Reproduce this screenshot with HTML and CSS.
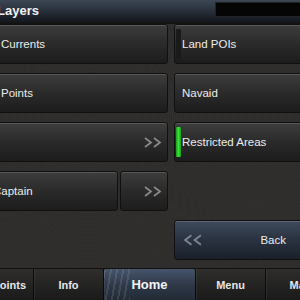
FILE: index.html
```html
<!DOCTYPE html>
<html>
<head>
<meta charset="utf-8">
<link rel="stylesheet" href="styles.css">
</head>
<body>
<div class="app">
  <header class="topbar">
    <h1 class="title">Layers</h1>
    <div class="status"></div>
  </header>
  <main class="grid">
    <button class="btn">Currents</button>
    <button class="btn btn-right"><span class="ind ind-off"></span>Land POIs</button>
    <button class="btn">Points</button>
    <button class="btn btn-right"><span class="ind ind-none"></span>Navaid</button>
    <button class="btn btn-chev"><svg class="chev" viewBox="0 0 19 11" width="19" height="11"><polyline points="2,1 8,5.5 2,10"/><polyline points="11,1 17,5.5 11,10"/></svg></button>
    <button class="btn btn-right"><span class="ind ind-on"></span>Restricted Areas</button>
    <div class="split">
      <button class="btn btn-cut">Captain</button>
      <button class="btn btn-chev"><svg class="chev" viewBox="0 0 19 11" width="19" height="11"><polyline points="2,1 8,5.5 2,10"/><polyline points="11,1 17,5.5 11,10"/></svg></button>
    </div>
    <div class="empty"></div>
    <div class="empty"></div>
    <button class="btn btn-back"><svg class="chev chev-back" viewBox="0 0 19 11" width="20" height="12"><polyline points="8,1 2,5.5 8,10"/><polyline points="17,1 11,5.5 17,10"/></svg><span class="back-label">Back</span></button>
  </main>
  <nav class="tabs">
    <div class="tab">Waypoints</div>
    <div class="tab">Info</div>
    <div class="tab tab-active">Home</div>
    <div class="tab">Menu</div>
    <div class="tab">Map</div>
  </nav>
</div>
</body>
</html>
```
FILE: styles.css
```css
* { box-sizing: border-box; }
html, body { margin: 0; padding: 0; }
body {
  width: 300px;
  height: 300px;
  overflow: hidden;
  background: #2e2d2b;
  font-family: "Liberation Sans", Arial, sans-serif;
}
.app {
  width: 300px;
  height: 300px;
  overflow: hidden;
  background:
    repeating-radial-gradient(circle at 30% 40%, rgba(255,255,255,0.015) 0 1px, rgba(0,0,0,0.03) 1px 2px),
    #2e2d2b;
}
.topbar {
  height: 24px;
  display: flex;
  align-items: flex-start;
  justify-content: space-between;
  background: linear-gradient(#3c4654 0, #2a323d 45%, #161b21 90%);
  border-bottom: 2px solid #141414;
}
.title {
  margin: 0 0 0 -3px;
  height: 22px;
  line-height: 21px;
  font-size: 13px;
  font-weight: bold;
  color: #f2f2f2;
}
.status {
  margin-top: 2px;
  width: 85px;
  height: 15px;
  background: #050505;
  border: 1px solid #222;
  border-right: none;
}
.grid {
  margin-left: -8px;
  width: 340px;
  display: grid;
  grid-template-columns: 176px 140px;
  grid-auto-rows: 40px;
  column-gap: 6px;
  row-gap: 9px;
}
.btn {
  margin: 0;
  padding: 0 0 0 8px;
  display: flex;
  align-items: center;
  font-family: inherit;
  font-size: 11.5px;
  color: #ececec;
  text-align: left;
  background: linear-gradient(#3d3d3d 0, #2c2c2c 45%, #1c1c1c 100%);
  border: 1px solid #101010;
  border-radius: 3px;
  box-shadow: inset 0 1px 0 rgba(255,255,255,0.14);
}
.btn-right { padding-left: 1px; }
.ind {
  width: 5px;
  height: 30px;
  margin-right: 1px;
  border-radius: 1px;
}
.ind-off { background: #1a1a1a; }
.ind-none { background: transparent; }
.ind-on { background: linear-gradient(90deg, #1a9a1a, #3be03b 50%, #1a9a1a); }
.btn-chev {
  justify-content: flex-end;
  padding-right: 5px;
}
.chev polyline {
  fill: none;
  stroke: #8a8a8a;
  stroke-width: 1.7;
}
.split {
  display: flex;
  gap: 2px;
}
.split .btn-cut { width: 126px; text-indent: -8px; }
.split .btn-chev { flex: 1; }
.btn-back {
  justify-content: space-between;
  padding: 0 27px 0 8px;
  background: linear-gradient(#3e4a5b 0, #2b3442 45%, #19202a 100%);
  border-color: #0e1014;
  box-shadow: inset 0 1px 0 rgba(255,255,255,0.16);
}
.chev-back polyline { stroke: #7c8797; }
.back-label { font-size: 11.5px; color: #ececec; }
.tabs {
  margin-top: 8px;
  margin-left: -36px;
  height: 32px;
  display: flex;
  background: linear-gradient(#2f2e2d, #1a1a1a);
  border-top: 1px solid #111;
}
.tab {
  flex: 0 0 70px;
  display: flex;
  align-items: center;
  justify-content: center;
  font-size: 11px;
  font-weight: bold;
  color: #e6e6e6;
  border-right: 1px solid #0b0b0b;
  box-shadow: inset 1px 0 0 rgba(255,255,255,0.06);
}
.tab-active {
  flex-basis: 92px;
  font-size: 13px;
  color: #f4f4f4;
  border-radius: 3px 3px 0 0;
  background:
    repeating-linear-gradient(100deg, rgba(255,255,255,0.10) 0 2px, transparent 2px 6px) 0 0 / 26px 100% no-repeat,
    linear-gradient(#46556b 0, #2f3949 50%, #222a36 100%);
}
```
